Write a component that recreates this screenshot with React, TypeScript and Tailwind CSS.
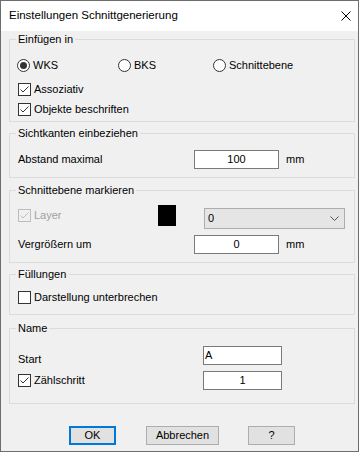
import type { ReactNode } from 'react';

// Checkbox im Windows-Stil
const Check = ({ checked, disabled }: { checked?: boolean; disabled?: boolean }) => (
  <span
    className={`w-[13px] h-[13px] border flex items-center justify-center shrink-0 ${
      disabled ? 'border-[#bcbcbc] bg-[#f0f0f0]' : 'border-[#333333] bg-white'
    }`}
  >
    {checked && (
      <svg width="11" height="11" viewBox="0 0 11 11">
        <path d="M1.5 5.5 L4 8 L9.5 2.5" stroke={disabled ? '#bcbcbc' : '#333333'} fill="none" strokeWidth="1" />
      </svg>
    )}
  </span>
);

// Radiobutton
const Radio = ({ checked }: { checked?: boolean }) => (
  <span className="w-[13px] h-[13px] rounded-full border border-[#333333] bg-white flex items-center justify-center shrink-0">
    {checked && <span className="w-[7px] h-[7px] rounded-full bg-[#333333]" />}
  </span>
);

// Gruppenrahmen mit Beschriftung
const Group = ({ title, className, children }: { title: string; className: string; children: ReactNode }) => (
  <div className={`relative ml-[8px] w-[346px] border border-[#dcdcdc] ${className}`}>
    <span className="absolute -top-[8px] left-[6px] px-[2px] bg-[#f0f0f0] leading-[14px]">{title}</span>
    {children}
  </div>
);

const Input = ({ value, className, left }: { value: string; className: string; left?: boolean }) => (
  <div
    className={`h-[19px] border border-[#7a7a7a] bg-white flex items-center ${
      left ? 'justify-start pl-[1px]' : 'justify-center'
    } ${className}`}
  >
    {value}
  </div>
);

const Button = ({ label, primary, className }: { label: string; primary?: boolean; className: string }) => (
  <div
    className={`h-[19px] bg-[#e1e1e1] flex items-center justify-center ${
      primary ? 'border-2 border-[#0078d7]' : 'border border-[#adadad]'
    } ${className}`}
  >
    {label}
  </div>
);

export default function App() {
  return (
    <div className="w-[362px] h-[453px] bg-white font-['Liberation_Sans',Arial,sans-serif] text-[11px] text-black">
      <div className="w-[359px] h-[452px] border border-[#6d6d6d] bg-[#f0f0f0]">
        {/* Titelleiste */}
        <div className="h-[30px] bg-white flex items-center justify-between pl-[8px] pr-[7px]">
          <span className="text-[11.5px]">Einstellungen Schnittgenerierung</span>
          <svg width="10" height="10" viewBox="0 0 10 10">
            <path d="M0.5 0.5 L9.5 9.5 M9.5 0.5 L0.5 9.5" stroke="#000" strokeWidth="1" fill="none" />
          </svg>
        </div>

        {/* Einfügen in */}
        <Group title="Einfügen in" className="mt-[8px] h-[83px] pt-[15px] pl-[7px]">
          <div className="h-[20px] flex items-center">
            <div className="w-[101px] flex items-center gap-[3px]">
              <Radio checked />
              <span>WKS</span>
            </div>
            <div className="w-[95px] flex items-center gap-[3px]">
              <Radio />
              <span>BKS</span>
            </div>
            <div className="flex items-center gap-[3px]">
              <Radio />
              <span>Schnittebene</span>
            </div>
          </div>
          <div className="mt-[4px] h-[20px] flex items-center gap-[3px] pl-[1px]">
            <Check checked />
            <span>Assoziativ</span>
          </div>
          <div className="h-[20px] flex items-center gap-[3px] pl-[1px]">
            <Check checked />
            <span>Objekte beschriften</span>
          </div>
        </Group>

        {/* Sichtkanten einbeziehen */}
        <Group title="Sichtkanten einbeziehen" className="mt-[11px] h-[45px] pt-[16px] pl-[8px]">
          <div className="h-[19px] flex items-center">
            <span className="w-[176px]">Abstand maximal</span>
            <Input value="100" className="w-[85px]" />
            <span className="ml-[7px]">mm</span>
          </div>
        </Group>

        {/* Schnittebene markieren */}
        <Group title="Schnittebene markieren" className="mt-[12px] h-[73px] pt-[14px] pl-[8px]">
          <div className="flex items-start">
            <div className="w-[140px] h-[21px] flex items-center gap-[3px]">
              <Check checked disabled />
              <span className="text-[#a0a0a0]">Layer</span>
            </div>
            <div className="w-[18px] h-[21px] bg-black" />
            <div className="ml-[28px] mt-[3px] w-[141px] h-[21px] bg-[#e5e5e5] border border-[#adadad] flex items-center justify-between pl-[3px] pr-[5px]">
              <span>0</span>
              <svg width="9" height="5" viewBox="0 0 9 5">
                <path d="M0.5 0.5 L4.5 4.5 L8.5 0.5" stroke="#555" strokeWidth="1" fill="none" />
              </svg>
            </div>
          </div>
          <div className="mt-[6px] h-[19px] flex items-center">
            <span className="w-[176px]">Vergrößern um</span>
            <Input value="0" className="w-[85px]" />
            <span className="ml-[7px]">mm</span>
          </div>
        </Group>

        {/* Füllungen */}
        <Group title="Füllungen" className="mt-[11px] h-[41px] pt-[12px] pl-[8px]">
          <div className="h-[20px] flex items-center gap-[3px]">
            <Check />
            <span>Darstellung unterbrechen</span>
          </div>
        </Group>

        {/* Name */}
        <Group title="Name" className="mt-[13px] h-[76px] pt-[17px] pl-[8px]">
          <div className="h-[19px] flex items-start">
            <span className="w-[185px] pt-[5px]">Start</span>
            <Input value="A" left className="w-[79px]" />
          </div>
          <div className="mt-[6px] h-[19px] flex items-center">
            <div className="w-[185px] flex items-center gap-[3px]">
              <Check checked />
              <span>Zählschritt</span>
            </div>
            <Input value="1" className="w-[79px]" />
          </div>
        </Group>

        {/* Schaltflächen */}
        <div className="mt-[22px] pl-[68px] flex items-center">
          <Button label="OK" primary className="w-[47px]" />
          <Button label="Abbrechen" className="ml-[30px] w-[73px]" />
          <Button label="?" className="ml-[29px] w-[47px]" />
        </div>
      </div>
    </div>
  );
}
